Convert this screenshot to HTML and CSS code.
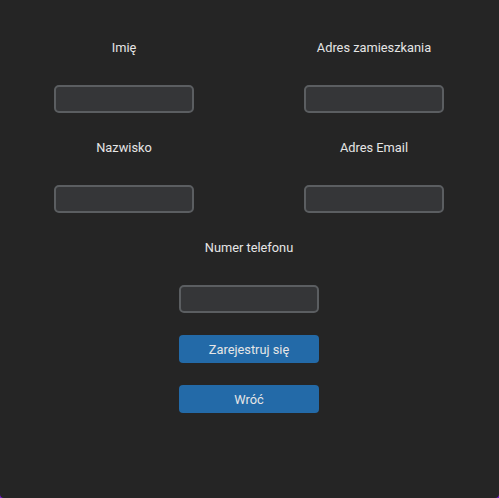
FILE: index.html
```html
<!DOCTYPE html>
<html lang="pl">
<head>
<meta charset="utf-8">
<title>Rejestracja</title>
<link rel="stylesheet" href="styles.css">
</head>
<body>
<div class="window">
  <div class="content">
    <div class="grid">
      <div class="field">
        <div class="cell cell-label"><span class="label">Imię</span></div>
        <div class="cell"><input class="input" type="text"></div>
      </div>
      <div class="field">
        <div class="cell cell-label"><span class="label">Adres zamieszkania</span></div>
        <div class="cell"><input class="input" type="text"></div>
      </div>
      <div class="field">
        <div class="cell cell-label"><span class="label">Nazwisko</span></div>
        <div class="cell"><input class="input" type="text"></div>
      </div>
      <div class="field">
        <div class="cell cell-label"><span class="label">Adres Email</span></div>
        <div class="cell"><input class="input" type="text"></div>
      </div>
    </div>
    <div class="single">
      <div class="cell cell-label"><span class="label">Numer telefonu</span></div>
      <div class="cell"><input class="input" type="text"></div>
      <div class="cell"><button class="btn">Zarejestruj się</button></div>
      <div class="cell"><button class="btn">Wróć</button></div>
    </div>
  </div>
</div>
</body>
</html>
```
FILE: styles.css
```css
html {
  background: #7a1fd0;
}
body {
  margin: 0;
  font-family: Roboto, "Liberation Sans", sans-serif;
}
.window {
  width: 499px;
  height: 498px;
  box-sizing: border-box;
  background: #252525;
  padding-top: 24px;
  border-radius: 0 0 4px 4px;
  overflow: hidden;
}
.content {
  width: 500px;
  margin-left: -1px;
}
.grid {
  display: grid;
  grid-template-columns: 250px 250px;
}
.field, .single {
  display: flex;
  flex-direction: column;
}
.cell {
  height: 50px;
  display: flex;
  align-items: center;
  justify-content: center;
}
.cell-label {
  box-sizing: border-box;
  padding-bottom: 3px;
}
.label {
  color: #e6e6e6;
  font-size: 12.8px;
}
.input {
  box-sizing: border-box;
  width: 140px;
  height: 28px;
  margin: 0;
  background: #353638;
  border: 2px solid #5b5e61;
  border-radius: 5px;
  outline: none;
}
.btn {
  box-sizing: border-box;
  width: 140px;
  height: 28px;
  margin: 0;
  background: #236aa8;
  border: none;
  border-radius: 4px;
  color: #e6e6e6;
  font-family: Roboto, "Liberation Sans", sans-serif;
  font-size: 12.8px;
}
```
